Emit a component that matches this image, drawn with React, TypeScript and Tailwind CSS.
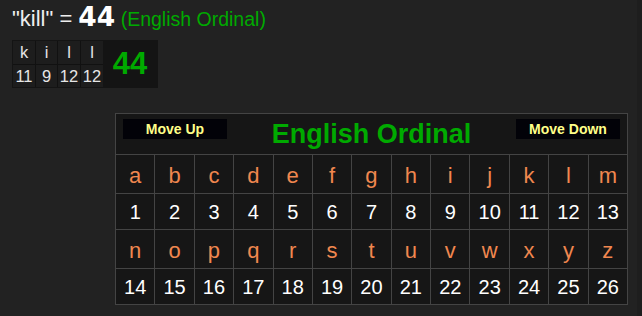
import React from "react";

const LETTERS = "abcdefghijklmnopqrstuvwxyz".split("");
const WORD = [
  { ch: "k", v: 11 },
  { ch: "i", v: 9 },
  { ch: "l", v: 12 },
  { ch: "l", v: 12 },
];

function LetterRow({ start }: { start: number }) {
  const slice = LETTERS.slice(start, start + 13);
  return (
    <>
      {slice.map((ch, i) => (
        <div
          key={`l-${start}-${i}`}
          className="h-[38px] bg-[#161616] flex justify-center pt-[10px] text-[22px] leading-none text-[#f0874f]"
        >
          {ch}
        </div>
      ))}
      {slice.map((_, i) => (
        <div
          key={`n-${start}-${i}`}
          className="h-[35px] bg-[#161616] flex justify-center pt-[8px] text-[20px] leading-none text-white"
        >
          {start + i + 1}
        </div>
      ))}
    </>
  );
}

export default function App() {
  return (
    <div className="min-h-screen w-full bg-[#222222] flex font-['Liberation_Sans',Arial,sans-serif]">
      <div className="flex-1">
        {/* Result line */}
        <div className="flex items-baseline pl-[12px] pt-[4px] whitespace-pre">
          <span className="text-[22px] leading-none text-[#eeeeee]">"kill" = </span>
          <span className="text-[26.5px] leading-none font-bold text-white font-['DejaVu_Sans',Verdana,sans-serif]">44</span>
          <span className="text-[19.5px] leading-none text-[#00aa00]"> (English Ordinal)</span>
        </div>

        {/* Word breakdown */}
        <div className="ml-[12px] mt-[9px] w-[146px] h-[48px] bg-[#141414] p-px flex">
          <div className="grid grid-cols-[22px_21px_22px_22px] grid-rows-[23px_22px] gap-px bg-[#111111]">
            {WORD.map((w, i) => (
              <div
                key={`c-${i}`}
                className="bg-[#1d1d1d] flex justify-center pt-[3px] text-[16.5px] leading-none text-[#e6e6e6]"
              >
                {w.ch}
              </div>
            ))}
            {WORD.map((w, i) => (
              <div
                key={`v-${i}`}
                className="bg-[#1d1d1d] flex justify-center pt-[3px] text-[16.5px] leading-none text-[#e6e6e6]"
              >
                {w.v}
              </div>
            ))}
          </div>
          <div className="flex-1 flex justify-center pt-[7px] text-[31px] leading-none font-bold text-[#00aa00]">
            44
          </div>
        </div>

        {/* Cipher chart */}
        <div className="ml-[115px] mt-[25px] w-[513px] border border-[#444444] bg-[#444444]">
          <div className="h-[40px] bg-[#161616] flex items-start justify-between px-[7px] pt-[5px]">
            <button className="w-[104px] h-[20px] bg-[#020208] text-[14px] leading-[20px] font-bold text-[#ffff88]">
              Move Up
            </button>
            <div className="pt-[2px] text-[27px] leading-none font-bold text-[#00aa00]">
              English Ordinal
            </div>
            <button className="w-[104px] h-[20px] bg-[#020208] text-[14px] leading-[20px] font-bold text-[#ffff88]">
              Move Down
            </button>
          </div>
          <div className="mt-px grid grid-cols-[repeat(13,minmax(0,1fr))] gap-px">
            <LetterRow start={0} />
            <LetterRow start={13} />
          </div>
        </div>
      </div>
      <div className="w-[5px] bg-[#1e1e1e]" />
    </div>
  );
}
